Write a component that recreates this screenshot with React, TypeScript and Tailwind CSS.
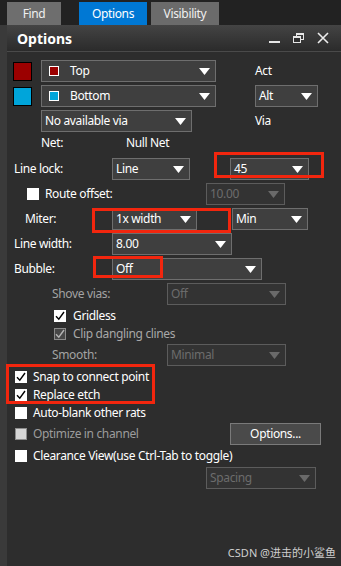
import React from 'react';

const FONT = { fontFamily: '"Noto Sans", "Noto Sans CJK SC", sans-serif' };

function Tri({ disabled }: { disabled?: boolean }) {
  return (
    <svg width="11" height="7" viewBox="0 0 11 7" className="shrink-0">
      <polygon points="0,0 11,0 5.5,7" fill={disabled ? '#6a6a6a' : '#ffffff'} />
    </svg>
  );
}

interface DropProps {
  w: string;
  text: string;
  disabled?: boolean;
  swatch?: string;
}

function Drop({ w, text, disabled, swatch }: DropProps) {
  return (
    <div
      className={`${w} h-[22px] shrink-0 flex items-center justify-between pl-[3px] pr-[5px] border ${
        disabled ? 'border-[#5c5c5c] bg-[#333333] text-[#6c6c6c]' : 'border-[#6e6e6e] bg-[#3f3f3f] text-white'
      }`}
    >
      <div className="flex items-center">
        {swatch && (
          <span className={`ml-[4px] mr-[11px] w-[10px] h-[10px] border border-white ${swatch}`} />
        )}
        <span>{text}</span>
      </div>
      <Tri disabled={disabled} />
    </div>
  );
}

function Check({ checked, disabled, light }: { checked?: boolean; disabled?: boolean; light?: boolean }) {
  const box = disabled
    ? light
      ? 'bg-[#d6d6d6] border-[#8c8c8c]'
      : 'bg-[#474747] border-[#8a8a8a]'
    : 'bg-white border-white';
  return (
    <span className={`w-[12px] h-[12px] shrink-0 border flex items-center justify-center ${box}`}>
      {checked && (
        <svg width="10" height="10" viewBox="0 0 10 10">
          <path d="M1 5.2 L3.8 8.2 L9 1" fill="none" stroke={disabled ? '#b4b4b4' : '#000'} strokeWidth="1.4" />
        </svg>
      )}
    </span>
  );
}

export default function App() {
  return (
    <div className="relative w-[341px] h-[566px] bg-[#2d2d2d] flex flex-col overflow-hidden text-[12px] tracking-[-0.35px] text-white" style={FONT}>
      {/* Tabs */}
      <div className="h-[25px] shrink-0 bg-[#222222] flex items-end pl-[7px]">
        <div className="w-[54px] h-[23px] bg-[#6e6e6e] flex items-center justify-center text-[#f0f0f0]">Find</div>
        <div className="ml-[18px] w-[68px] h-[23px] bg-[#0078d4] flex items-center justify-center">Options</div>
        <div className="ml-[4px] w-[68px] h-[23px] bg-[#6b6b6b] flex items-center justify-center text-[#f0f0f0]">Visibility</div>
      </div>

      <div className="flex flex-1">
        <div className="w-[7px] shrink-0 bg-[#3a3a3a]" />
        <div className="flex-1 flex flex-col">
          {/* Title bar */}
          <div className="h-[27px] shrink-0 flex items-center justify-between pl-[10px] pr-[12px] bg-gradient-to-b from-[#444444] to-[#2b2b2b] border-b border-[#4a4a4a]">
            <span className="text-[14px] font-bold tracking-normal">Options</span>
            <div className="flex items-center">
              <svg width="12" height="12" viewBox="0 0 12 12">
                <rect x="0" y="9" width="11" height="2" fill="#e6e6e6" />
              </svg>
              <svg width="11" height="11" viewBox="0 0 11 11" className="ml-[12px]">
                <rect x="3.5" y="0.5" width="7" height="6" fill="none" stroke="#e6e6e6" />
                <rect x="0.5" y="3.5" width="7" height="6" fill="#2f2f2f" stroke="#e6e6e6" />
                <rect x="0.5" y="3.5" width="7" height="1.5" fill="#e6e6e6" />
                <rect x="3.5" y="0.5" width="7" height="1.5" fill="#e6e6e6" />
              </svg>
              <svg width="12" height="12" viewBox="0 0 12 12" className="ml-[13px]">
                <path d="M1 1 L11 11 M11 1 L1 11" stroke="#ececec" strokeWidth="1.6" />
              </svg>
            </div>
          </div>

          {/* Layer rows */}
          <div className="mt-[8px] h-[22px] flex items-center">
            <span className="ml-[6px] w-[19px] h-[19px] border border-black bg-[#9b0000]" />
            <div className="ml-[9px]">
              <Drop w="w-[175px]" text="Top" swatch="bg-[#9b0000]" />
            </div>
            <span className="ml-[39px]">Act</span>
          </div>
          <div className="mt-[3px] h-[22px] flex items-center">
            <span className="ml-[6px] w-[19px] h-[19px] border border-black bg-[#00a5da]" />
            <div className="ml-[9px]">
              <Drop w="w-[175px]" text="Bottom" swatch="bg-[#00a5da]" />
            </div>
            <div className="ml-[39px]">
              <Drop w="w-[63px]" text="Alt" />
            </div>
          </div>
          <div className="mt-[3px] h-[22px] flex items-center">
            <div className="ml-[34px]">
              <Drop w="w-[151px]" text="No available via" />
            </div>
            <span className="ml-[63px]">Via</span>
          </div>
          <div className="mt-[2px] h-[18px] flex items-center">
            <span className="ml-[34px] w-[85px]">Net:</span>
            <span>Null Net</span>
          </div>

          {/* Line lock */}
          <div className="mt-[6px] h-[22px] flex items-center">
            <span className="w-[105px] pl-[7px]">Line lock:</span>
            <Drop w="w-[78px]" text="Line" />
            <div className="ml-[40px]">
              <Drop w="w-[79px]" text="45" />
            </div>
          </div>
          <div className="mt-[3px] h-[22px] flex items-center">
            <div className="w-[199px] flex items-center pl-[20px]">
              <Check />
              <span className="ml-[6px]">Route offset:</span>
            </div>
            <Drop w="w-[79px]" text="10.00" disabled />
          </div>
          <div className="mt-[3px] h-[22px] flex items-center">
            <span className="w-[105px] pl-[18px]">Miter:</span>
            <Drop w="w-[85px]" text="1x width" />
            <div className="ml-[35px]">
              <Drop w="w-[76px]" text="Min" />
            </div>
          </div>
          <div className="mt-[3px] h-[22px] flex items-center">
            <span className="w-[105px] pl-[7px]">Line width:</span>
            <Drop w="w-[120px]" text="8.00" />
          </div>
          <div className="mt-[3px] h-[22px] flex items-center">
            <span className="w-[105px] pl-[7px]">Bubble:</span>
            <Drop w="w-[150px]" text="Off" />
          </div>
          <div className="mt-[3px] h-[22px] flex items-center">
            <span className="w-[160px] pl-[45px] text-[#a3a3a3]">Shove vias:</span>
            <Drop w="w-[119px]" text="Off" disabled />
          </div>
          <div className="mt-[2px] h-[18px] flex items-center pl-[47px]">
            <Check checked />
            <span className="ml-[7px]">Gridless</span>
          </div>
          <div className="h-[18px] flex items-center pl-[47px]">
            <Check checked disabled />
            <span className="ml-[7px] text-[#a8a8a8]">Clip dangling clines</span>
          </div>
          <div className="mt-[1px] h-[22px] flex items-center">
            <span className="w-[160px] pl-[45px] text-[#a3a3a3]">Smooth:</span>
            <Drop w="w-[119px]" text="Minimal" disabled />
          </div>

          {/* Bottom options */}
          <div className="mt-[2px] h-[18px] flex items-center pl-[8px]">
            <Check checked />
            <span className="ml-[6px]">Snap to connect point</span>
          </div>
          <div className="h-[18px] flex items-center pl-[8px]">
            <Check checked />
            <span className="ml-[6px]">Replace etch</span>
          </div>
          <div className="h-[18px] flex items-center pl-[8px]">
            <Check />
            <span className="ml-[6px]">Auto-blank other rats</span>
          </div>
          <div className="mt-[1px] h-[22px] flex items-center">
            <div className="w-[223px] flex items-center pl-[8px]">
              <Check disabled light />
              <span className="ml-[6px] text-[#9c9c9c]">Optimize in channel</span>
            </div>
            <div className="w-[91px] h-[22px] flex items-center justify-center bg-[#4a4a4a] border border-[#7a7a7a]">
              Options...
            </div>
          </div>
          <div className="mt-[2px] h-[18px] flex items-center pl-[8px]">
            <Check />
            <span className="ml-[6px]">Clearance View(use Ctrl-Tab to toggle)</span>
          </div>
          <div className="mt-[2px] h-[22px] flex items-center">
            <div className="w-[199px]" />
            <Drop w="w-[110px]" text="Spacing" disabled />
          </div>

          <div className="flex-1 flex items-end justify-end pr-[5px] pb-[5px]">
            <span className="text-[11px] tracking-normal text-[#cfcfcf]">CSDN @进击的小鲨鱼</span>
          </div>
        </div>
      </div>

      {/* Red annotation boxes */}
      <div className="absolute left-[214px] top-[152px] w-[110px] h-[26px] border-[3px] border-[#f2260e]" />
      <div className="absolute left-[92px] top-[208px] w-[139px] h-[25px] border-[3px] border-[#f2260e]" />
      <div className="absolute left-[93px] top-[256px] w-[70px] h-[22px] border-[3px] border-[#f2260e]" />
      <div className="absolute left-[6px] top-[364px] w-[149px] h-[40px] border-[3px] border-[#f2260e]" />
    </div>
  );
}
